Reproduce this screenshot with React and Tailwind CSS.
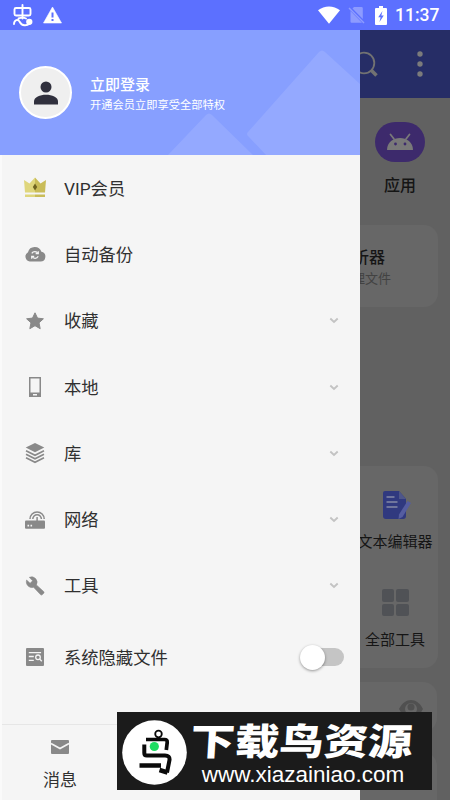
const menuItems = [
  { label: 'VIP会员', icon: CrownIcon },
  { label: '自动备份', icon: CloudIcon },
  { label: '收藏', icon: StarIcon, expandable: true },
  { label: '本地', icon: PhoneIcon, expandable: true },
  { label: '库', icon: LayersIcon, expandable: true },
  { label: '网络', icon: RouterIcon, expandable: true },
  { label: '工具', icon: WrenchIcon, expandable: true },
];

function CrownIcon() {
  return (
    <svg width="24" height="22" viewBox="0 0 24 22">
      <path d="M1 3l5.500 3.500L12 .5v15H2z" fill="#dfd67c" />
      <path d="M23 3l-5.500 3.500L12 .5v15h10z" fill="#c9bc58" />
      <path d="M12 6.5l2.200 3.500L12 13.500 9.800 10z" fill="#6f6320" />
      <path d="M2 17.500h10V20H2z" fill="#dfd67c" />
      <path d="M12 17.500h10V20H12z" fill="#c9bc58" />
    </svg>
  );
}

function CloudIcon() {
  return (
    <svg width="22" height="18" viewBox="0 0 22 18">
      <path d="M5.800 16.500A5 5 0 0 1 4 7.200 7 7 0 0 1 17.400 6.800a4.900 4.900 0 0 1-1.200 9.700z" fill="#898989" />
      <g fill="none" stroke="#f5f5f5" strokeWidth="1.200">
        <path d="M7.800 8.400a3.500 3.500 0 0 1 6.200.2M14.200 11.300a3.500 3.500 0 0 1-6.200.2" />
        <path d="M14.300 6.200v2.500h-2.600M7.700 13.800v-2.400h2.500" />
      </g>
    </svg>
  );
}

function StarIcon() {
  return (
    <svg width="20" height="20" viewBox="0 0 20 20">
      <path
        d="M10 1.800l2.500 5.300 5.900.7-4.400 4 1.200 5.900-5.200-3-5.200 3L6 11.800l-4.400-4 5.900-.7z"
        fill="#898989"
        stroke="#898989"
        strokeLinejoin="round"
      />
    </svg>
  );
}

function PhoneIcon() {
  return (
    <svg width="14" height="22" viewBox="0 0 14 22">
      <path d="M1 1h12v20H1z" fill="#898989" />
      <path d="M2.500 2.500h9v14h-9z" fill="#f5f5f5" />
      <path d="M5 18h4v1.500H5z" fill="#f5f5f5" />
    </svg>
  );
}

function LayersIcon() {
  return (
    <svg width="20" height="22" viewBox="0 0 20 22">
      <path d="M10 1l9.300 4.600L10 10.300.7 5.600z" fill="#898989" />
      <path
        d="M1 8.800l9 4.500 9-4.500M1 12.300l9 4.500 9-4.500M1 15.800l9 4.500 9-4.500"
        fill="none"
        stroke="#898989"
        strokeWidth="1.600"
      />
    </svg>
  );
}

function RouterIcon() {
  return (
    <svg width="22" height="20" viewBox="0 0 22 20">
      <rect x="1" y="10.500" width="20" height="8.300" rx="1" fill="#898989" />
      <path d="M3.500 14.800h1.600v1.600H3.500zM6.500 14.800h1.600v1.600H6.500z" fill="#f5f5f5" />
      <g fill="none" stroke="#898989" strokeWidth="1.500">
        <path d="M6 9a7 7 0 1 1 14.200 0M8.800 9a4.300 4.300 0 1 1 8.600 0M13.100 7v4" />
      </g>
    </svg>
  );
}

function WrenchIcon() {
  return (
    <svg width="20" height="20" viewBox="0 0 20 20">
      <path
        d="M18.600 15.500l-7.200-6.600A5.500 5.500 0 0 0 4.300 1.300l3.300 3.500-2.500 2.500-3.500-3.300c-1.300 4.200 2.400 8.600 7 7.300l6.900 7.300c.6.700 1.300.6 1.900 0l1.300-1.300c.5-.5.4-1.300-.1-1.800z"
        fill="#898989"
        stroke="#898989"
        strokeWidth=".6"
      />
    </svg>
  );
}

function HiddenFilesIcon() {
  return (
    <svg width="18" height="18" viewBox="0 0 18 18">
      <rect width="18" height="18" rx="1" fill="#898989" />
      <g fill="none" stroke="#f5f5f5" strokeWidth="1.300">
        <path d="M2.800 4.700h12.300M2.800 8.500h5M2.800 12.300h5" />
        <circle cx="12" cy="9.300" r="2.300" />
        <path d="M13.600 11l2.200 2.300" />
      </g>
    </svg>
  );
}

function ChevronIcon() {
  return (
    <svg width="10" height="7" viewBox="0 0 10 7" fill="none">
      <path d="M1.300 1.500L5 4.900l3.700-3.400" stroke="#c3c3c3" strokeWidth="1.900" />
    </svg>
  );
}

function StatusBar() {
  return (
    <div className="flex h-[30px] shrink-0 items-center bg-[#5c70ff] pl-3 pr-[8px] text-white">
      <svg width="22" height="24" viewBox="0 0 22 24" fill="none" stroke="white" strokeWidth="1.900" strokeLinecap="round">
        <rect x="2.500" y="5" width="16" height="7.500" rx="1.500" />
        <path d="M10.500 2v13.500M6.500 15.500c2.500-1 6-.8 7.500 0M2 21c.2-4 4-5.500 5.800-2 2 4.300 7.200 3.900 9.800 1.500" />
        <circle cx="17.300" cy="18.800" r="2.200" fill="white" />
      </svg>
      <svg className="ml-[9px]" width="19" height="18" viewBox="0 0 19 18">
        <path d="M9.500 1L18.500 17H.5z" fill="white" stroke="white" strokeWidth=".6" strokeLinejoin="round" />
        <path d="M8.500 6.500h2v5h-2zM8.500 13h2v2h-2z" fill="#5c70ff" />
      </svg>
      <svg className="ml-auto" width="22" height="18" viewBox="0 0 22 18">
        <path d="M0 4.300C6.300-.8 15.700-.8 22 4.300L11 17.800z" fill="white" />
      </svg>
      <svg className="ml-[8px]" width="17" height="18" viewBox="0 0 17 18">
        <path d="M6 1h7.500q1.300 0 1.300 1.300V13L4.500 2.500zM2.500 5l11.500 11.800H3.500q-1 0-1-1z" fill="#8d9bff" />
        <path d="M1 2l15 15" stroke="#8d9bff" strokeWidth="1.400" />
      </svg>
      <svg className="ml-[10px]" width="12" height="19" viewBox="0 0 12 19">
        <path d="M4 0h4v2h3q1 0 1 1v15q0 1-1 1H1q-1 0-1-1V3q0-1 1-1h3z" fill="white" />
        <path d="M7.500 5L3.200 11.200h2.400L4.500 16l4.300-6.500H6.300z" fill="#5c70ff" />
      </svg>
      <span className="ml-[8px] w-[47px] whitespace-nowrap pt-px font-['Roboto'] text-[17.500px] font-medium leading-none">11:37</span>
    </div>
  );
}

function DrawerHeader() {
  return (
    <div className="relative flex h-[125px] shrink-0 items-center overflow-hidden bg-[#879fff] pl-[19px]">
      <svg className="absolute inset-0" width="360" height="125" viewBox="0 0 360 125">
        <path d="M168 125l38-40q3-3 6 0l41 40z" fill="#94a9ff" />
        <path d="M248 106q-2-2 0-4l71-80q3-3 6 0l35 32v71h-94z" fill="#94a9ff" />
      </svg>
      <div className="relative flex size-[53px] items-center justify-center rounded-full border-2 border-white bg-[#efefef]">
        <svg width="26" height="26" viewBox="0 0 26 26" fill="#30303d">
          <circle cx="13" cy="7" r="5.500" />
          <path d="M1 24.500v-3c0-9 24-9 24 0v3z" />
        </svg>
      </div>
      <div className="relative ml-[18px] pt-[3px] text-white">
        <p className="text-[15px] font-medium leading-[20px]">立即登录</p>
        <p className="mt-[3px] text-[11.250px] leading-[16px]">开通会员立即享受全部特权</p>
      </div>
    </div>
  );
}

function Drawer() {
  return (
    <aside className="flex w-[360px] shrink-0 flex-col border-l-2 border-l-[#fafafa] bg-[#f5f5f5]">
      <div className="-ml-[2px]">
        <DrawerHeader />
      </div>
      <nav>
        {menuItems.map(({ label, icon: Icon, expandable }) => (
          <div key={label} className="flex h-[66.300px] items-center pr-[21px]">
            <span className="flex w-[62px] justify-center pl-1">
              <Icon />
            </span>
            <span className="flex-1 pt-[3px] text-[17.300px] text-[#303030]">{label}</span>
            {expandable && <ChevronIcon />}
          </div>
        ))}
      </nav>
      <div className="flex h-[76px] items-center pr-[16px]">
        <span className="flex w-[62px] justify-center pl-1">
          <HiddenFilesIcon />
        </span>
        <span className="flex-1 pt-[3px] text-[17.300px] text-[#303030]">系统隐藏文件</span>
        <span className="flex h-[18px] w-[43px] items-center rounded-full bg-[#c5c5c5]">
          <span className="-ml-px size-[25px] shrink-0 rounded-full bg-white shadow-[0_1px_3px_rgba(0,0,0,0.4)]" />
        </span>
      </div>
      <div className="mt-auto h-[76px] border-t border-[#e6e6e6]">
        <div className="flex w-[116px] flex-col items-center pt-[15px]">
          <svg width="18" height="14" viewBox="0 0 18 14">
            <rect width="18" height="14" rx="1" fill="#898989" />
            <path d="M0 3.500l9 5 9-5" fill="none" stroke="#f5f5f5" strokeWidth="1.700" />
          </svg>
          <span className="mt-[13px] text-[17px] leading-[26px] text-[#303030]">消息</span>
        </div>
      </div>
    </aside>
  );
}

function DimmedPage() {
  return (
    <main className="flex w-[90px] flex-col overflow-hidden bg-[#616161]">
      <div className="flex h-[68px] shrink-0 items-center justify-between bg-[#262d66] pr-[26px]">
        <svg width="18" height="28" viewBox="0 0 18 28" fill="none" stroke="#727272">
          <circle cx="4" cy="13" r="10.300" strokeWidth="1.800" />
          <path d="M11 20l5.500 5.500" strokeWidth="3.500" />
        </svg>
        <svg width="8" height="28" viewBox="0 0 8 28" fill="#7b7b7b">
          <circle cx="4" cy="4" r="2.700" />
          <circle cx="4" cy="14" r="2.700" />
          <circle cx="4" cy="24" r="2.700" />
        </svg>
      </div>

      <div className="ml-[15px] mt-[24px] flex w-[50px] shrink-0 flex-col items-center">
        <div className="flex h-[40px] w-[50px] items-center justify-center rounded-[20px] bg-[#3d2a6c]">
          <svg width="28" height="18" viewBox="0 0 28 18">
            <path d="M1 17C1 1 27 1 27 17z" fill="#797979" />
            <path d="M8 6L4.500 1.500M20 6l3.500-4.500" stroke="#797979" strokeWidth="1.800" strokeLinecap="round" />
            <circle cx="9.500" cy="11" r="1.400" fill="#3d2a6c" />
            <circle cx="19" cy="11" r="1.400" fill="#3d2a6c" />
          </svg>
        </div>
        <span className="mt-[12px] text-[16px] font-medium leading-[24px] text-[#151515]">应用</span>
      </div>

      <div className="mr-[12px] mt-[27px] flex h-[82px] shrink-0 flex-col items-start justify-center rounded-r-[14px] bg-[#676767] pt-[2px]">
        <span className="-ml-[23px] whitespace-nowrap text-[16px] font-medium leading-[24px] text-[#151515]">分析器</span>
        <span className="-ml-[21px] -mt-px whitespace-nowrap text-[13px] leading-[20px] text-[#424242]">管理文件</span>
      </div>

      <div className="mr-[12px] mt-[159px] flex h-[202px] shrink-0 flex-col items-center rounded-r-[14px] bg-[#676767] pt-[24px]">
        <svg className="mr-[5px]" width="30" height="30" viewBox="0 0 30 30">
          <path d="M3 1h14l7 8v17q0 3-3 3H4q-3 0-3-3V3q0-2 2-2z" fill="#30397f" />
          <path d="M17 1l7 8h-7z" fill="#4e568a" />
          <path d="M4.500 7h8M4.500 12h11M4.500 17h11" stroke="#6f759c" strokeWidth="2" />
          <path d="M25.500 11l3.500 2-8.500 14-4 2 .5-4.500z" fill="#555da0" />
        </svg>
        <span className="-mr-[100px] ml-[-108px] mt-[10px] whitespace-nowrap text-[15px] leading-[24px] text-[#151515]">文本编辑器</span>
        <div className="mr-[8px] mt-[35px] grid grid-cols-2 gap-[2px]">
          <span className="size-[12.500px] rounded-[2px] bg-[#505256]" />
          <span className="size-[12.500px] rounded-[2px] bg-[#505256]" />
          <span className="size-[12.500px] rounded-[2px] bg-[#505256]" />
          <span className="size-[12.500px] rounded-[2px] bg-[#505256]" />
        </div>
        <span className="mr-[8px] mt-[12px] whitespace-nowrap text-[15px] leading-[24px] text-[#151515]">全部工具</span>
      </div>

      <div className="mr-[13px] mt-[14px] h-[50px] shrink-0 rounded-r-[14px] bg-[#676767]">
        <svg className="ml-[38px] mt-[17px]" width="26" height="22" viewBox="0 0 26 22">
          <path d="M1 10c6-12 18-12 24 0-6 12-18 12-24 0z" fill="#505050" />
          <circle cx="13" cy="10" r="6" fill="#676767" />
          <circle cx="13" cy="8" r="3.500" fill="#505050" />
        </svg>
      </div>
      <div className="mr-[13px] mt-[20px] h-[80px] shrink-0 rounded-r-[14px] bg-[#676767]" />
    </main>
  );
}

function SiteBanner() {
  return (
    <div className="absolute left-[117px] top-[712px] flex h-[78px] w-[315px] items-center bg-[#1b1b1b] pl-[5px] text-white">
      <svg className="mt-[2px] shrink-0" width="65" height="65" viewBox="0 0 65 65" fill="none" stroke="#0a0a0a">
        <circle cx="32.500" cy="32.500" r="32.300" fill="white" stroke="none" />
        <circle cx="36.500" cy="14" r="3.300" strokeWidth="1.800" />
        <path d="M24 19.500h18.500q3 0 2.700 3l-.9 7.500" strokeWidth="3.700" />
        <path d="M22.300 24.500v8.500q0 2.500 2.500 2.500H43q5 0 4.500 4.500L45 52.500" strokeWidth="4" />
        <path d="M17.500 45.500H39M37.500 50l8 2.500" strokeWidth="4.500" />
        <circle cx="32.300" cy="26.500" r="4.600" fill="#1fdc62" stroke="none" />
      </svg>
      <div className="ml-[2px] flex w-[224px] flex-col items-center pt-[9px]">
        <span className="-skew-x-3 scale-x-[1.2] whitespace-nowrap text-[37px] font-black leading-[40px]">下载鸟资源</span>
        <span className="-mt-px ml-1 font-['Liberation_Sans'] text-[22.500px] leading-[26px]">www.xiazainiao.com</span>
      </div>
    </div>
  );
}

export default function App() {
  return (
    <div className="relative flex h-[800px] w-[450px] flex-col overflow-hidden font-['Roboto','Noto_Sans_CJK_SC',sans-serif]">
      <StatusBar />
      <div className="flex min-h-0 flex-1">
        <Drawer />
        <DimmedPage />
      </div>
      <SiteBanner />
    </div>
  );
}
